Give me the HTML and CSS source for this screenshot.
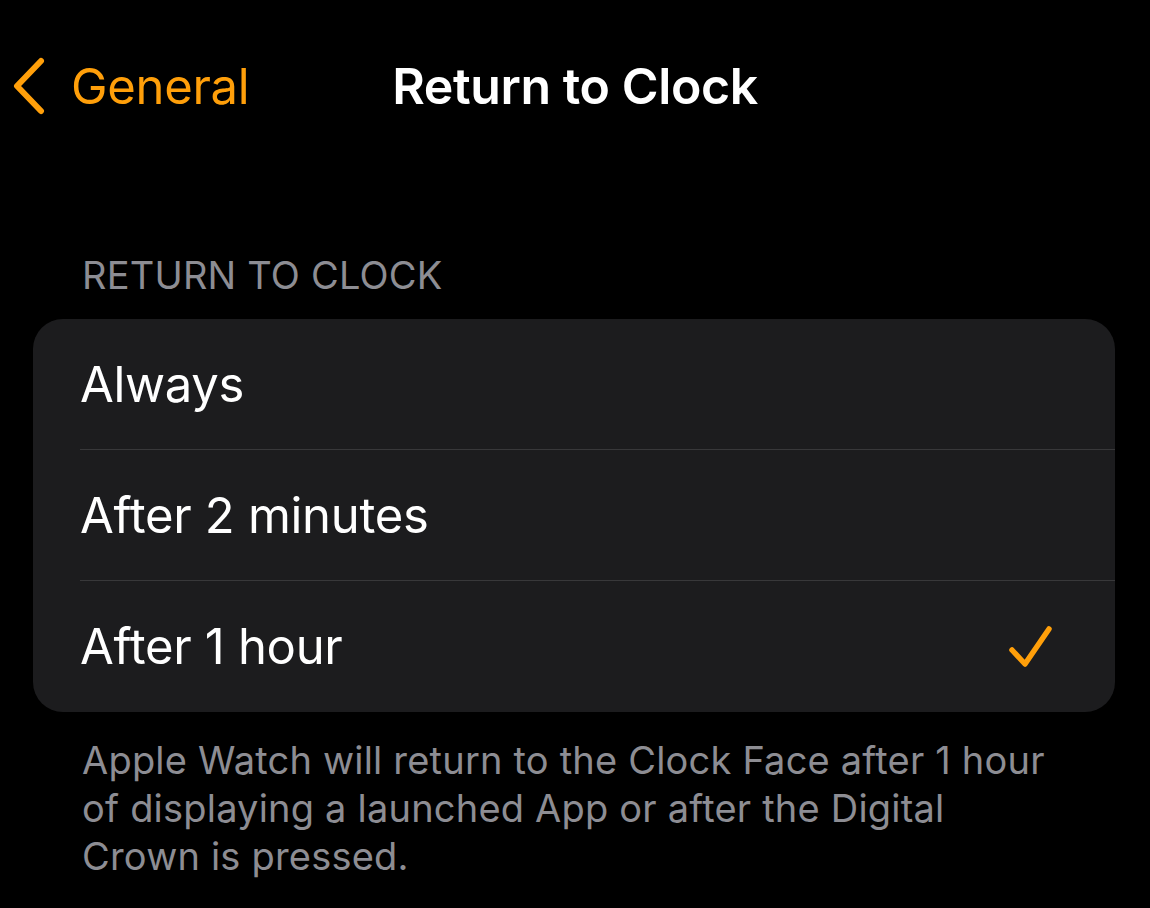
FILE: index.html
```html
<!DOCTYPE html>
<html lang="en">
<head>
    <meta charset="UTF-8">
    <meta name="viewport" content="width=device-width, initial-scale=1.0">
    <title>Return to Clock</title>
    <link rel="stylesheet" href="styles.css">
</head>
<body>
    <div class="screen">
        <div class="nav">
            <a class="back" href="#">
                <svg class="chevron" width="34" height="58" viewBox="0 0 34 58">
                    <path d="M29 4 L5 29 L29 54" fill="none" stroke="#ff9f0a" stroke-width="6" stroke-linecap="round" stroke-linejoin="round"/>
                </svg>
                <span>General</span>
            </a>
            <h1 class="title">Return to Clock</h1>
            <div></div>
        </div>

        <div class="section">
            <div class="section-header">RETURN TO CLOCK</div>
            <div class="list">
                <div class="row"><span>Always</span></div>
                <div class="row"><span>After 2 minutes</span></div>
                <div class="row selected">
                    <span>After 1 hour</span>
                    <svg class="check" width="48" height="46" viewBox="0 0 48 46">
                        <path d="M5 26 L18 40 L42 5" fill="none" stroke="#ff9f0a" stroke-width="5.5" stroke-linecap="round" stroke-linejoin="round"/>
                    </svg>
                </div>
            </div>
            <p class="footer">Apple Watch will return to the Clock Face after 1 hour of displaying a launched App or after the Digital Crown is pressed.</p>
        </div>
    </div>
</body>
</html>
```

FILE: styles.css
```css
body { margin: 0; background-color: #000; color: #fff; font-family: Inter, "Noto Sans", sans-serif; }
.screen { width: 1150px; height: 908px; overflow: hidden; }

.nav {
    display: grid;
    grid-template-columns: 1fr auto 1fr;
    align-items: center;
    height: 172px;
}
.back {
    display: flex;
    align-items: center;
    gap: 25px;
    padding-left: 12px;
    color: #ff9f0a;
    text-decoration: none;
    font-size: 49px;
    letter-spacing: -0.3px;
}
.title { margin: 0; font-size: 50px; font-weight: 600; letter-spacing: -0.4px; }

.section { padding: 0 35px; margin-top: 84px; }
.section-header {
    padding-left: 47px;
    font-size: 38px;
    color: #8d8d93;
    letter-spacing: 0.2px;
    line-height: 1;
    margin-bottom: 25px;
}
.list { background-color: #1c1c1e; border-radius: 30px; overflow: hidden; margin-left: -2px; }
.row {
    display: flex;
    align-items: center;
    justify-content: space-between;
    height: 131px;
    margin-left: 47px;
    padding-right: 60px;
    font-size: 49px;
    letter-spacing: -0.3px;
    border-bottom: 1.5px solid #38383a;
    box-sizing: border-box;
}
.row:last-child { border-bottom: none; }
.footer {
    margin: 24px 0 0;
    padding-left: 47px;
    width: 970px;
    font-size: 38px;
    line-height: 48px;
    color: #8d8d93;
    letter-spacing: 0.2px;
}
```
